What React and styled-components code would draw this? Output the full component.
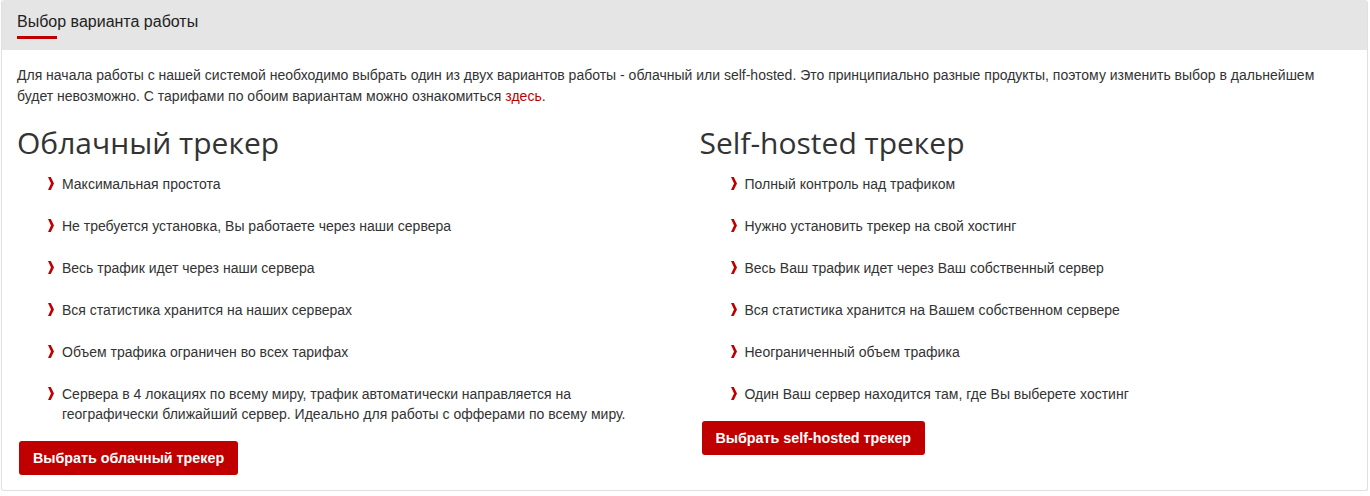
import React from "react";
import styled, { createGlobalStyle } from "styled-components";

const Global = createGlobalStyle`
  body {
    margin: 0;
    background: #fff;
    font-family: Arial, "Liberation Sans", sans-serif;
    color: #333;
  }
`;

const Panel = styled.div`
  margin: 0 1px;
  width: 1367px;
  height: 491px;
  box-sizing: border-box;
  border: 1px solid #e0e0e0;
  border-top: none;
  border-radius: 3px;
  box-shadow: 0 1px 1px rgba(0, 0, 0, 0.05);
  overflow: hidden;
`;

const Header = styled.div`
  background: #e5e5e5;
  height: 50px;
  box-sizing: border-box;
  padding: 11px 15px 0;
`;

const Title = styled.div`
  display: inline-block;
  font-size: 16px;
  line-height: 21px;
  color: #222;
  &::after {
    content: "";
    display: block;
    width: 40px;
    height: 3px;
    margin-top: 4px;
    background: #c00000;
  }
`;

const Body = styled.div`
  padding: 15px 15px 0;
`;

const Intro = styled.p`
  margin: 0;
  font-size: 14px;
  line-height: 21px;
  color: #333;
`;

const Link = styled.a`
  color: #c00000;
  text-decoration: none;
`;

const Columns = styled.div`
  display: grid;
  grid-template-columns: 1fr 1fr;
  column-gap: 30px;
  margin-top: 16px;
`;

const Heading = styled.h2`
  margin: 0;
  font-family: "Open Sans", sans-serif;
  font-weight: 400;
  font-size: 30px;
  line-height: 40px;
  color: #333;
`;

const List = styled.ul`
  list-style: none;
  margin: 11px 0 0;
  padding: 0 0 0 31px;
`;

const Item = styled.li`
  display: flex;
  align-items: flex-start;
  gap: 8px;
  font-size: 14px;
  line-height: 20px;
  margin-bottom: 22px;
  max-width: 580px;
  &:last-child {
    margin-bottom: 0;
  }
`;

const Arrow = styled.svg`
  flex: none;
  width: 6px;
  height: 13px;
  margin-top: 3px;
`;

const Button = styled.button`
  margin: 17px 0 0 2px;
  height: 34px;
  padding: 0 14px;
  border: none;
  border-radius: 3px;
  background: #c00000;
  color: #fff;
  font-family: Arial, "Liberation Sans", sans-serif;
  font-weight: bold;
  font-size: 14.3px;
  cursor: pointer;
`;

const Chevron = () => (
  <Arrow viewBox="0 0 6 13">
    <path d="M0 0 L2.8 0 L6 6.5 L2.8 13 L0 13 L3 6.5 Z" fill="#c00000" />
  </Arrow>
);

const cloud = [
  "Максимальная простота",
  "Не требуется установка, Вы работаете через наши сервера",
  "Весь трафик идет через наши сервера",
  "Вся статистика хранится на наших серверах",
  "Объем трафика ограничен во всех тарифах",
  "Сервера в 4 локациях по всему миру, трафик автоматически направляется на географически ближайший сервер. Идеально для работы с офферами по всему миру.",
];

const selfHosted = [
  "Полный контроль над трафиком",
  "Нужно установить трекер на свой хостинг",
  "Весь Ваш трафик идет через Ваш собственный сервер",
  "Вся статистика хранится на Вашем собственном сервере",
  "Неограниченный объем трафика",
  "Один Ваш сервер находится там, где Вы выберете хостинг",
];

function Column({ title, items, button }) {
  return (
    <div>
      <Heading>{title}</Heading>
      <List>
        {items.map((t) => (
          <Item key={t}>
            <Chevron />
            <span>{t}</span>
          </Item>
        ))}
      </List>
      <Button>{button}</Button>
    </div>
  );
}

export default function App() {
  return (
    <>
      <Global />
      <Panel>
        <Header>
          <Title>Выбор варианта работы</Title>
        </Header>
        <Body>
          <Intro>
            Для начала работы с нашей системой необходимо выбрать один из двух
            вариантов работы - облачный или self-hosted. Это принципиально
            разные продукты, поэтому изменить выбор в дальнейшем будет
            невозможно. С тарифами по обоим вариантам можно ознакомиться{" "}
            <Link href="#">здесь</Link>.
          </Intro>
          <Columns>
            <Column title="Облачный трекер" items={cloud} button="Выбрать облачный трекер" />
            <Column title="Self-hosted трекер" items={selfHosted} button="Выбрать self-hosted трекер" />
          </Columns>
        </Body>
      </Panel>
    </>
  );
}
